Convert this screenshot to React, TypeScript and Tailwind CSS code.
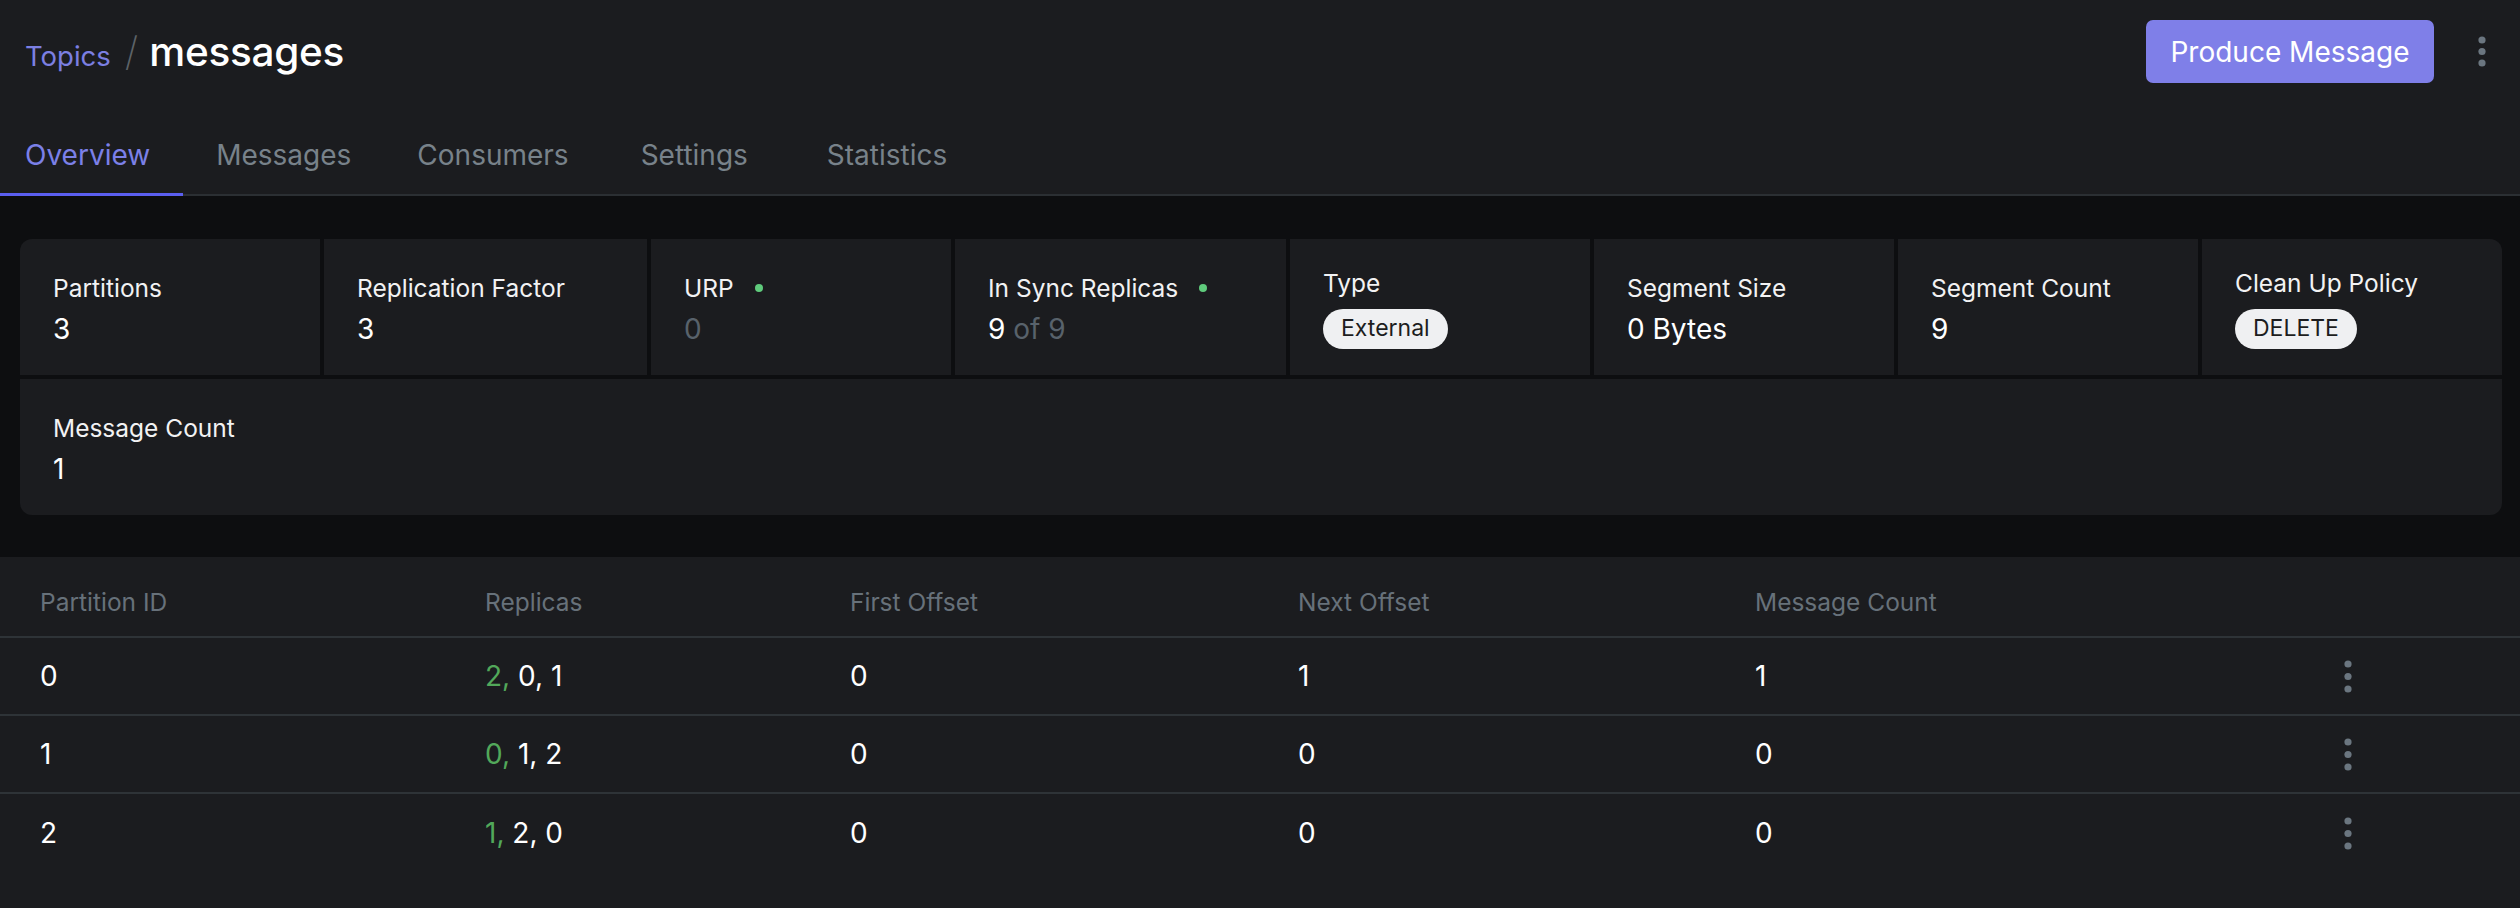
import React from 'react';

const tabs = [
  { name: 'Overview', pad: 'pl-[25px] pr-[33px]' },
  { name: 'Messages', pad: 'px-[33px]' },
  { name: 'Consumers', pad: 'px-[33px]' },
  { name: 'Settings', pad: 'pl-[39px] pr-[33px]' },
  { name: 'Statistics', pad: 'pl-[46px] pr-[33px]' },
];

interface Stat {
  label: string;
  width: string;
  dot?: boolean;
  value: React.ReactNode;
  badge?: boolean;
}

const stats: Stat[] = [
  { label: 'Partitions', width: 'w-[300px]', value: '3' },
  { label: 'Replication Factor', width: 'w-[323px]', value: '3' },
  { label: 'URP', width: 'w-[300px]', dot: true, value: <span className="text-[#58626b]">0</span> },
  {
    label: 'In Sync Replicas',
    width: 'w-[331px]',
    dot: true,
    value: (
      <>
        9 <span className="text-[#58626b]">of 9</span>
      </>
    ),
  },
  { label: 'Type', width: 'w-[300px]', badge: true, value: 'External' },
  { label: 'Segment Size', width: 'w-[300px]', value: '0 Bytes' },
  { label: 'Segment Count', width: 'w-[300px]', value: '9' },
  { label: 'Clean Up Policy', width: 'w-[300px]', badge: true, value: 'DELETE' },
  { label: 'Message Count', width: 'basis-full', value: '1' },
];

const partitions = [
  { id: 0, leader: 2, rest: '0, 1', first: 0, next: 1, count: 1 },
  { id: 1, leader: 0, rest: '1, 2', first: 0, next: 0, count: 0 },
  { id: 2, leader: 1, rest: '2, 0', first: 0, next: 0, count: 0 },
];

const Kebab = ({ gap }: { gap: number }) => (
  <svg width="8" height={gap * 2 + 8} viewBox={`0 0 8 ${gap * 2 + 8}`} className="block">
    <circle cx="4" cy="4" r="3.6" fill="#6b7680" />
    <circle cx="4" cy={4 + gap} r="3.6" fill="#6b7680" />
    <circle cx="4" cy={4 + gap * 2} r="3.6" fill="#6b7680" />
  </svg>
);

const App: React.FC = () => {
  return (
    <div className="min-h-[908px] w-[2520px] bg-[#1b1c1f] font-['Inter','Noto_Sans',sans-serif] text-white">
      {/* Header */}
      <div className="flex h-[103px] items-center pl-[25px] pr-[34px]">
        <div className="flex items-baseline">
          <span className="text-[27.5px] text-[#7b7fe2]">Topics</span>
          <span className="ml-[14px] mr-[11px] text-[40px] font-extralight text-[#5d6368]">/</span>
          <h1 className="text-[40.5px] font-medium leading-none tracking-[-0.3px]">messages</h1>
        </div>
        <div className="flex-1" />
        <button className="h-[63px] w-[288px] rounded-[7px] bg-[#7f7fe8] text-[28px] text-white">
          Produce Message
        </button>
        <div className="ml-[44px]">
          <Kebab gap={11.5} />
        </div>
      </div>

      {/* Tabs */}
      <div className="flex border-b-2 border-[#2b2f33]">
        {tabs.map((tab, i) => (
          <div
            key={tab.name}
            className={`-mb-[2px] border-b-[3px] pb-[20px] pt-[35px] text-[28px] leading-[35px] ${tab.pad} ${
              i === 0 ? 'border-[#5b5ff0] text-[#7b80e8]' : 'border-transparent text-[#78828a]'
            }`}
          >
            {tab.name}
          </div>
        ))}
      </div>

      {/* Stats */}
      <div className="bg-[#0d0e10] pb-[42px] pl-[20px] pr-[18px] pt-[43px]">
        <div className="flex flex-wrap gap-[4px] overflow-hidden rounded-[12px]">
          {stats.map((s) => (
            <div
              key={s.label}
              className={`${s.width} flex h-[136px] flex-col justify-center bg-[#1b1c1f] pl-[33px] ${
                s.badge ? '' : 'pt-[6px]'
              }`}
            >
              <div className="flex items-center text-[24.5px] leading-[35px] text-[#f2f2f3]">
                {s.label}
                {s.dot && <span className="ml-[21px] h-[8px] w-[8px] rounded-full bg-[#5fcb7c]" />}
              </div>
              {s.badge ? (
                <div className="mt-[8px]">
                  <span className="inline-flex h-[40px] items-center rounded-full bg-[#eff0f2] px-[18px] text-[23px] text-[#1c1d20]">
                    {s.value}
                  </span>
                </div>
              ) : (
                <div className="mt-[2px] text-[28px] leading-[42px] text-white">{s.value}</div>
              )}
            </div>
          ))}
        </div>
      </div>

      {/* Partitions table */}
      <div>
        <div className="flex border-b-2 border-[#2e3337] pb-[16px] pt-[28px] text-[24.5px] leading-[35px] text-[#67717a]">
          <div className="w-[445px] pl-[40px]">Partition ID</div>
          <div className="w-[365px] pl-[40px]">Replicas</div>
          <div className="w-[448px] pl-[40px]">First Offset</div>
          <div className="w-[457px] pl-[40px]">Next Offset</div>
          <div className="flex-1 pl-[40px]">Message Count</div>
          <div className="w-[220px]" />
        </div>
        {partitions.map((p, i) => (
          <div
            key={p.id}
            className={`flex h-[78px] items-center text-[28px] text-white ${
              i < partitions.length - 1 ? 'border-b-2 border-[#2e3337]' : ''
            }`}
          >
            <div className="w-[445px] pl-[40px]">{p.id}</div>
            <div className="w-[365px] pl-[40px]">
              <span className="text-[#52a85a]">{p.leader},</span> {p.rest}
            </div>
            <div className="w-[448px] pl-[40px]">{p.first}</div>
            <div className="w-[457px] pl-[40px]">{p.next}</div>
            <div className="flex-1 pl-[40px]">{p.count}</div>
            <div className="w-[220px] pl-[44px]">
              <Kebab gap={12.5} />
            </div>
          </div>
        ))}
      </div>
    </div>
  );
};

export default App;
